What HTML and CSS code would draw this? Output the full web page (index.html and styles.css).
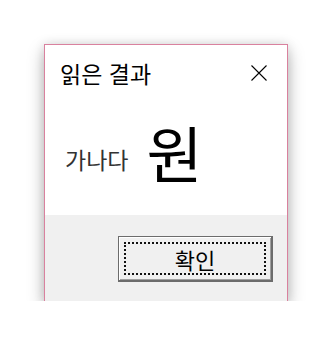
FILE: index.html
```html
<!DOCTYPE html>
<html lang="ko">
<head>
    <meta charset="UTF-8">
    <title>읽은 결과</title>
    <link rel="stylesheet" href="styles.css">
</head>
<body>
    <div class="dialog">
        <div class="title-bar">
            <span class="title">읽은 결과</span>
            <span class="close">
                <svg width="16" height="16" viewBox="0 0 16 16">
                    <path d="M0.5 0.5 L15.5 15.5 M15.5 0.5 L0.5 15.5" stroke="#000" stroke-width="1.1" fill="none"/>
                </svg>
            </span>
        </div>
        <div class="content">
            <span class="label">가나다</span>
            <span class="result">원</span>
        </div>
        <div class="footer">
            <button class="ok-button"><span class="focus">확인</span></button>
        </div>
    </div>
</body>
</html>
```

FILE: styles.css
```css
body {
    margin: 0;
    padding: 0;
    background-color: #fff;
    font-family: "Noto Sans CJK KR", "Noto Sans", sans-serif;
}
.dialog {
    width: 242px;
    margin: 44px 0 0 44px;
    border: 1px solid #d9819e;
    border-bottom: none;
    background-color: #fff;
    box-shadow: 0 7px 16px rgba(0, 0, 0, 0.28), 0 0 10px rgba(0, 0, 0, 0.1);
}
.title-bar {
    display: flex;
    justify-content: space-between;
    align-items: center;
    height: 54px;
    padding: 0 20px 0 15px;
}
.title {
    font-size: 23px;
    color: #000;
    line-height: 1;
    padding-top: 2px;
}
.close {
    display: flex;
    padding-top: 2px;
}
.content {
    display: flex;
    align-items: center;
    height: 116px;
    padding-left: 20px;
}
.label {
    font-size: 23px;
    color: #333;
    line-height: 1;
    margin-top: 4px;
}
.result {
    font-size: 61px;
    color: #000;
    line-height: 1;
    margin-left: 18px;
    margin-top: -12px;
}
.footer {
    display: flex;
    justify-content: flex-end;
    height: 86px;
    padding: 21px 14px 0 0;
    box-sizing: border-box;
    background-color: #f0f0f0;
}
.ok-button {
    width: 155px;
    height: 46px;
    padding: 5px;
    box-sizing: border-box;
    background-color: #f0f0f0;
    border: 1px solid #6c6c6c;
    border-right-width: 2px;
    border-bottom-width: 2px;
    box-shadow: inset 1px 1px 0 #fff, inset -1px -1px 0 #a0a0a0;
    font-family: "Noto Sans CJK KR", "Noto Sans", sans-serif;
    font-size: 22px;
    color: #000;
    cursor: pointer;
}
.focus {
    display: flex;
    justify-content: center;
    align-items: center;
    height: 100%;
    border: 2px dotted #111;
    box-sizing: border-box;
    line-height: 1;
}
```
